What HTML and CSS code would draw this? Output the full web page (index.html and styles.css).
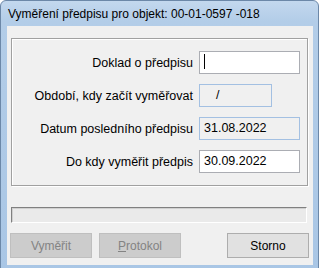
FILE: index.html
```
<!DOCTYPE html>
<html>
<head>
<meta charset="utf-8">
<link rel="stylesheet" href="styles.css">
</head>
<body>
<div class="window">
  <div class="titlebar">Vyměření předpisu pro objekt: 00-01-0597 -018</div>
  <div class="client">
    <div class="group">
      <label class="lbl">Doklad o předpisu</label>
      <div class="field edit w100"><span class="caret"></span></div>
      <label class="lbl">Období, kdy začít vyměřovat</label>
      <div class="field ro w72"><span class="slash">/</span></div>
      <label class="lbl">Datum posledního předpisu</label>
      <div class="field ro w100">31.08.2022</div>
      <label class="lbl">Do kdy vyměřit předpis</label>
      <div class="field edit w100">30.09.2022</div>
    </div>
    <div class="progress"></div>
    <div class="buttons">
      <button class="btn disabled">Vyměřit</button>
      <button class="btn disabled"><u>P</u>rotokol</button>
      <span class="spacer"></span>
      <button class="btn">Storno</button>
    </div>
  </div>
</div>
</body>
</html>
```
FILE: styles.css
```
html, body {
  margin: 0;
  padding: 0;
  background: #ffffff;
}
body {
  width: 319px;
  height: 268px;
  overflow: hidden;
  font-family: "Liberation Sans", Arial, sans-serif;
  font-size: 12px;
  color: #000;
}
.window {
  box-sizing: border-box;
  width: 319px;
  height: 270px;
  border: 1px solid #6c88a8;
  border-radius: 6px 6px 0 0;
  background: linear-gradient(#c3d8ee 0px, #b3cde8 20px, #a9c6e5 270px);
  display: flex;
  flex-direction: column;
  padding: 0 5px 0 6px;
}
.titlebar {
  height: 25px;
  line-height: 26px;
  padding-left: 1px;
  font-size: 12px;
  color: #000;
  white-space: nowrap;
}
.client {
  background: #f0f0f0;
  height: 239px;
  display: flex;
  flex-direction: column;
  padding: 0 0 0 4px;
}
.group {
  margin-top: 12px;
  width: 295px;
  border: 1px solid #a0a0a0;
  box-shadow: inset 1px 1px 0 #fff, 1px 1px 0 #fff;
  padding: 12px 0 12px 0;
  display: grid;
  grid-template-columns: 181px auto;
  column-gap: 6px;
  row-gap: 10px;
  align-items: center;
}
.lbl {
  text-align: right;
  white-space: nowrap;
  color: #000;
  font-size: 12.5px;
}
.field {
  box-sizing: border-box;
  height: 23px;
  line-height: 21px;
  padding-left: 4px;
  border: 1px solid #7a7a7a;
  background: #fff;
  font-size: 12.5px;
}
.w100 { width: 101px; }
.w72 { width: 73px; }
.edit {
  border-color: #abadb3;
  background: #fff;
}
.ro {
  border-color: #a3c0e2;
  background: #f0f0f0;
}
.caret {
  display: inline-block;
  width: 1px;
  height: 15px;
  background: #000;
  vertical-align: middle;
  margin-top: -3px;
}
.slash {
  padding-left: 12px;
}
.progress {
  margin-top: 21px;
  width: 296px;
  height: 16px;
  box-sizing: border-box;
  border-top: 1px solid #808080;
  border-left: 1px solid #808080;
  border-right: 1px solid #fff;
  border-bottom: 1px solid #fff;
  background: #eaeaea;
  box-shadow: inset 1px 1px 0 #d0d0d0;
}
.buttons {
  margin-top: 10px;
  display: flex;
  column-gap: 7px;
  margin-left: -1px;
  width: 299px;
}
.spacer { flex: 1; }
.btn {
  box-sizing: border-box;
  width: 82px;
  height: 25px;
  padding: 0;
  font-family: "Liberation Sans", Arial, sans-serif;
  font-size: 12px;
  color: #000;
  background: #e1e1e1;
  border: 1px solid #adadad;
}
.btn.disabled {
  background: #cccccc;
  border-color: #bfbfbf;
  color: #838383;
}
.btn u { text-decoration: underline; }
```
